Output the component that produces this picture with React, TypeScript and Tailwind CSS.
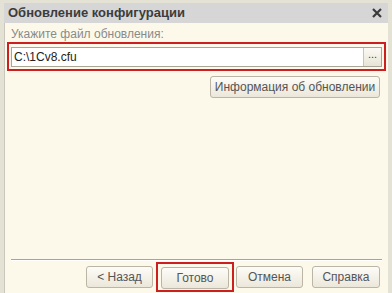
import React from "react";

const Btn: React.FC<{ label: string; className?: string }> = ({ label, className }) => (
    <button
        className={
            "h-[22px] whitespace-nowrap rounded-[3px] border border-[#bab5a4] bg-gradient-to-b from-[#fdfcf8] to-[#ebe7da] text-[12px] text-[#555] " +
            (className || "")
        }
    >
        {label}
    </button>
);

const App: React.FC = () => {
    return (
        <div
            className="w-[392px] h-[293px] bg-[#e4e1d5] pt-[3px] pl-[4px] pr-[4px] flex flex-col"
            style={{ fontFamily: "Tahoma, 'Liberation Sans', Arial, sans-serif" }}
        >
            <div className="h-[20px] bg-[#d6d6d6] flex items-center justify-between pl-[4px] pr-[5px]">
                <span className="text-[13px] font-bold text-[#3c3c3c]">Обновление конфигурации</span>
                <svg width="12" height="12" viewBox="0 0 12 12">
                    <path d="M2 2 L10 10 M10 2 L2 10" stroke="#3a3a3a" strokeWidth="2.2" />
                </svg>
            </div>
            <div className="flex-1 bg-[#fdf9ea] border-l border-[#c9c6bb] flex flex-col">
                <div className="text-[12px] text-[#8a8a8a] pl-[6px] pt-[4px] leading-[15px]">Укажите файл обновления:</div>
                <div className="ml-[2px] mr-[2px] h-[29px] border-[2px] border-[#cc1f1f] flex items-center px-[2px]">
                    <div className="flex-1 h-[20px] bg-white border border-[#a9a697] flex items-center">
                        <span className="text-[12px] text-[#222] pl-[2px] flex-1">C:\1Cv8.cfu</span>
                        <div className="w-[18px] h-[18px] bg-gradient-to-b from-[#fbfaf4] to-[#e8e4d6] border-l border-[#c9c5b5] flex items-center justify-center text-[11px] text-[#444] leading-none pb-[4px]">
                            ...
                        </div>
                    </div>
                </div>
                <div className="flex justify-end pr-[8px] pt-[5px]">
                    <Btn label="Информация об обновлении" className="w-[170px] text-[11.5px]" />
                </div>
                <div className="flex-1" />
                <div className="mx-[6px] h-[2px] border-t border-[#a8a594] border-b-white border-b" />
                <div className="flex justify-end items-center pr-[8px] pt-[1px] pb-[1px]">
                    <Btn label="< Назад" className="w-[67px] mr-[3px]" />
                    <div className="border-[2px] border-[#cc1f1f] px-[3px] py-[1px] mr-[2px]">
                        <Btn label="Готово" className="w-[68px]" />
                    </div>
                    <Btn label="Отмена" className="w-[67px] mr-[9px]" />
                    <Btn label="Справка" className="w-[68px]" />
                </div>
            </div>
        </div>
    );
};

export default App;
